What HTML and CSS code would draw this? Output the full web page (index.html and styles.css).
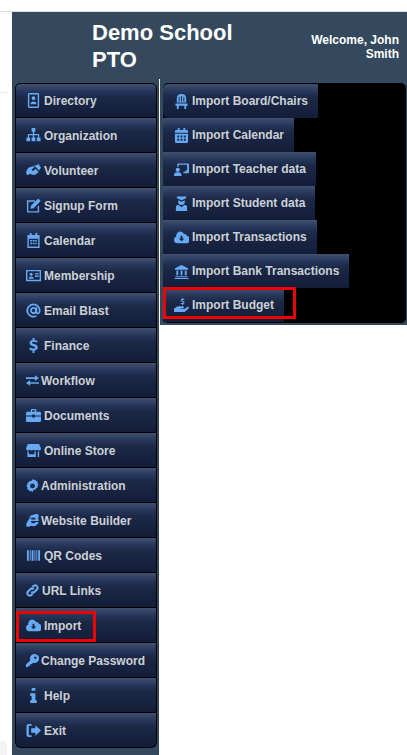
FILE: index.html
```html
<!DOCTYPE html>
<html lang="en">
<head>
    <meta charset="UTF-8">
    <meta name="viewport" content="width=device-width, initial-scale=1.0">
    <title>Import Budget</title>
    <link rel="stylesheet" href="styles.css">
</head>
<body>
    <div class="edge-line"></div>
    <div class="edge-chip"></div>

    <div class="page">
        <div class="header">
            <h1 class="school">Demo School PTO</h1>
            <div class="welcome">Welcome, John Smith</div>
        </div>

        <div class="body-row">
            <ul class="menu side">
                <li><a><span class="ico"><svg viewBox="0 0 16 16"><path fill-rule="evenodd" d="M3.500 0h9A1.500 1.500 0 0 1 14 1.500v13a1.500 1.500 0 0 1-1.500 1.500h-9A1.500 1.500 0 0 1 2 14.500v-13A1.500 1.500 0 0 1 3.500 0zM3.500 1.500v13h9v-13zM8 3.500a2 2 0 1 1 0 4 2 2 0 0 1 0-4zM4.800 12c0-2 1.400-3 3.200-3s3.200 1 3.200 3z"/></svg></span>Directory</a></li>
                <li><a><span class="ico"><svg viewBox="0 0 16 16"><path d="M6 0h4v4H8.700v2.500H14V10h1.500v4h-4v-4h1.300V7.800H8.700V10H10v4H6v-4h1.300V7.800H3.200V10h1.300v4h-4v-4H2V6.500h5.300V4H6z"/></svg></span>Organization</a></li>
                <li><a><span class="ico"><svg viewBox="0 0 16 16"><path d="M0 9.500L2.500 5 7 3.500l2.500.5-3.500 3 1 1.500 3.500-2L13.500 9.500 10 12.500H6.500L4.500 11.500 1 13zM8.500 3L12 2l1-1.500L16 5l-2 3-3.500-3.500z"/></svg></span>Volunteer</a></li>
                <li><a><span class="ico"><svg viewBox="0 0 16 16"><path d="M2 2.500h7.500V4h-7v10h10V8.500H14V15.500H1V2.500zM13 .5l2.700 2.700L8 11l-3.200.5.500-3.200z"/></svg></span>Signup Form</a></li>
                <li><a><span class="ico"><svg viewBox="0 0 16 16"><path fill-rule="evenodd" d="M4 0h2v2h4V0h2v2h2.500v14H1.500V2H4zM3 6v8.500h10V6zM4.500 7.500h2V9h-2zm2.700 0h2V9h-2zm2.700 0h1.700V9H9.900zM4.500 10.500h2V12h-2zm2.700 0h2V12h-2zm2.700 0h1.700V12H9.900z"/></svg></span>Calendar</a></li>
                <li><a><span class="ico"><svg viewBox="0 0 16 16"><path fill-rule="evenodd" d="M0 2h16v12H0zm1.500 1.500v9h13v-9zM5.500 5a1.700 1.700 0 1 1 0 3.400A1.700 1.700 0 0 1 5.500 5zM2.800 11.500c0-1.600 1.200-2.400 2.700-2.400s2.700.8 2.700 2.400zM9.500 5.500h4V7h-4zm0 2.500h4v1.500h-4z"/></svg></span>Membership</a></li>
                <li><a><span class="ico"><svg viewBox="0 0 16 16"><path fill-rule="evenodd" d="M8 .5a7.500 7.500 0 0 1 7.500 7.500c0 2.500-1.300 4-3.200 4-1 0-1.700-.5-2-1.200-.6.700-1.400 1.100-2.300 1.100A3.600 3.600 0 0 1 4.400 8 3.700 3.700 0 0 1 8 4.200c.8 0 1.500.3 2 .8V4.500h2v4.700c0 .7.200 1.100.7 1.100.7 0 1-1 1-2.300A5.700 5.700 0 1 0 8 13.700c1 0 2-.2 2.800-.7l.8 1.500A7.500 7.500 0 1 1 8 .5zM8 6.200A1.800 1.800 0 1 0 8 9.800 1.800 1.800 0 0 0 8 6.200z"/></svg></span>Email Blast</a></li>
                <li><a><span class="ico"><svg viewBox="0 0 16 16"><path d="M7 0h2v2c1.500.1 2.700.6 3.500 1.200l-1 1.800C10.500 4.400 9.400 4 8.300 4 7 4 6.500 4.500 6.500 5c0 .7.800 1 2.300 1.500 2.300.7 3.700 1.500 3.700 3.500 0 1.900-1.400 3-3.500 3.300V16H7v-2.700c-1.500-.1-2.800-.6-3.700-1.400l1.100-1.800c1 .7 2.300 1.200 3.500 1.200 1.300 0 2-.4 2-1.100 0-.7-.7-1-2.200-1.500C5.300 8 3.800 7.200 3.800 5.200 3.800 3.400 5.100 2.300 7 2z"/></svg></span>Finance</a></li>
                <li><a><span class="ico short"><svg viewBox="0 0 16 16"><path d="M0 4h11V1.500L16 5l-5 3.500V6H0zM16 10H5V7.500L0 11l5 3.500V12h11z"/></svg></span>Workflow</a></li>
                <li><a><span class="ico"><svg viewBox="0 0 16 16"><path fill-rule="evenodd" d="M5 2.500A1.500 1.500 0 0 1 6.500 1h3A1.500 1.500 0 0 1 11 2.500V4h3.500A1.500 1.500 0 0 1 16 5.500V8h-6.500V7h-3v1H0V5.500A1.500 1.500 0 0 1 1.500 4H5zM6.500 2.500V4h3V2.500zM0 9h6.500v1h3V9H16v4.500a1.500 1.500 0 0 1-1.500 1.500h-13A1.500 1.500 0 0 1 0 13.500z"/></svg></span>Documents</a></li>
                <li><a><span class="ico"><svg viewBox="0 0 16 16"><path d="M2 1h12l2 4.500C16 7 15 8 13.800 8c-.7 0-1.400-.4-1.800-1-.4.600-1.100 1-2 1s-1.600-.4-2-1c-.4.600-1.100 1-2 1s-1.600-.4-2-1c-.4.600-1.100 1-1.800 1C1 8 0 7 0 5.500zM1.500 9H3v3h6V9h1.500v6h-9zM12.500 9H14v6h-1.500z"/></svg></span>Online Store</a></li>
                <li><a><span class="ico short"><svg viewBox="0 0 16 16"><path fill-rule="evenodd" d="M8 0l1.500 1.200 2-.4 1 1.800 1.900.8-.2 2 1.300 1.600-1.300 1.600.2 2-1.900.8-1 1.800-2-.4L8 16l-1.500-1.200-2 .4-1-1.800-1.900-.8.200-2L.5 8.500l1.300-1.600-.2-2 1.900-.8 1-1.800 2 .4zM8 5.500a3 3 0 1 0 0 6 3 3 0 0 0 0-6z"/></svg></span>Administration</a></li>
                <li><a><span class="ico short"><svg viewBox="0 0 16 16"><path fill-rule="evenodd" d="M9 1c2-1 5.500-1.500 6.500.5.500 1-.1 2.300-.8 3.400.7 1 1.100 2.200 1.100 3.600H6c.1 2 1.500 3 3 3 1.200 0 2.300-.6 2.800-1.700h3.800C14.700 13 12 15 9 15c-1 0-2-.2-2.800-.6C4.500 15.500 2 16.500.8 15.300-.3 14.200.3 11.800 2 9 3.300 6.700 5 4.700 7 3.300 5 3.500 3.800 4.700 3 6 3.500 3.700 5.800 1.600 9 1zM6 6.800h6c0-1.500-1.300-2.600-3-2.600S6.100 5.300 6 6.800z"/></svg></span>Website Builder</a></li>
                <li><a><span class="ico"><svg viewBox="0 0 16 16"><path d="M1 2.500h2v11H1zm3 0h1v11H4zm2 0h2v11H6zm3 0h1v11H9zm2 0h1v11h-1zm2 0h2v11h-2z"/></svg></span>QR Codes</a></li>
                <li><a><span class="ico mid"><svg viewBox="0 0 16 16"><path class="line" d="M6.500 9.500a3 3 0 0 0 4.200 0l3-3a3 3 0 0 0-4.200-4.200L8 3.800M9.500 6.500a3 3 0 0 0-4.200 0l-3 3a3 3 0 0 0 4.200 4.200L8 12.200"/></svg></span>URL Links</a></li>
                <li><a><span class="ico"><svg viewBox="0 0 16 16"><path fill-rule="evenodd" d="M6.500 1.500a4.500 4.500 0 0 1 4.200 2.800A2.700 2.700 0 0 1 13.800 6.500 3.700 3.700 0 0 1 12.500 14H3.500a3.700 3.700 0 0 1-1-7.200A4.500 4.500 0 0 1 6.500 1.500zM7 6v3H5l3 3 3-3H9V6z"/></svg></span>Import</a><span class="marker"></span></li>
                <li><a><span class="ico short"><svg viewBox="0 0 16 16"><path fill-rule="evenodd" d="M10.500 0a5.500 5.500 0 1 1-1.700 10.700L7 12.500H5V14.500H3V16H0v-3l5.300-5.300A5.500 5.500 0 0 1 10.500 0zM11.500 3a1.500 1.500 0 1 0 0 3 1.500 1.500 0 0 0 0-3z"/></svg></span>Change Password</a></li>
                <li><a><span class="ico"><svg viewBox="0 0 16 16"><path d="M6 0h4v3H6zM4.500 5.500H10V13h1.500v3h-7v-3H6V8.500H4.500z"/></svg></span>Help</a></li>
                <li><a><span class="ico"><svg viewBox="0 0 16 16"><path d="M6 3H3.500C3 3 3 3.500 3 4v8c0 .5 0 1 .5 1H6v2H3a2.500 2.500 0 0 1-2.500-2.500v-9A2.500 2.500 0 0 1 3 1h3zM10 2.500L16 8l-6 5.500V10.500H5.500v-5H10z"/></svg></span>Exit</a></li>
            </ul>

            <div class="sub-panel">
                <ul class="menu sub">
                    <li><a><span class="ico"><svg viewBox="0 0 16 16"><path fill-rule="evenodd" d="M8 0c3 0 5 1.500 5 4.500V9H3V4.500C3 1.500 5 0 8 0zM5 3v5h1V3zm2.500-1v6h1V2zM10 3v5h1V3zM1.500 10h13v2.500H13V16h-2v-3.500H5V16H3v-3.500H1.500z"/></svg></span>Import Board/Chairs</a></li>
                    <li><a><span class="ico"><svg viewBox="0 0 16 16"><path fill-rule="evenodd" d="M4 0h2v2h4V0h2v2h1.500A1.500 1.500 0 0 1 15 3.500V5H1V3.500A1.500 1.500 0 0 1 2.500 2H4zM1 6h14v8.500a1.500 1.500 0 0 1-1.500 1.500h-11A1.500 1.500 0 0 1 1 14.500zM3.500 8v2h2V8zm3.500 0v2h2V8zm3.500 0v2h2V8zM3.500 11.500v2h2v-2zm3.500 0v2h2v-2zm3.500 0v2h2v-2z"/></svg></span>Import Calendar</a></li>
                    <li><a><span class="ico"><svg viewBox="0 0 16 16"><path d="M4 1.500h11a1 1 0 0 1 1 1V11a1 1 0 0 1-1 1h-5v-1.500h2V9h2V3H5v2H3.500V2A.5.500 0 0 1 4 1.500zM4 6a2.300 2.300 0 1 1 0 4.600A2.300 2.300 0 0 1 4 6zM0 14c0-1.700 1.300-3 3-3h2c1.700 0 3 1.300 3 3v1H0z"/></svg></span>Import Teacher data</a></li>
                    <li><a><span class="ico"><svg viewBox="0 0 16 16"><path d="M3 .5h10v2L8 4.500 3 2.500zM4.500 4.500L8 6l3.500-1.500V6a3.500 3.500 0 0 1-7 0zM2 11.500C2 10 3.500 9.500 5 9.500l3 2.500 3-2.500c1.500 0 3 .5 3 2V16H2z"/></svg></span>Import Student data</a></li>
                    <li><a><span class="ico"><svg viewBox="0 0 16 16"><path fill-rule="evenodd" d="M6.500 1.500a4.500 4.500 0 0 1 4.200 2.800A2.700 2.700 0 0 1 13.800 6.500 3.700 3.700 0 0 1 12.500 14H3.500a3.700 3.700 0 0 1-1-7.200A4.500 4.500 0 0 1 6.500 1.500zM7 6v3H5l3 3 3-3H9V6z"/></svg></span>Import Transactions</a></li>
                    <li><a><span class="ico"><svg viewBox="0 0 16 16"><path d="M8 1l7 3.500V6H1V4.500zM2.500 7h2v5h-2zm4.500 0h2v5H7zm4.500 0h2v5h-2zM1.500 13h13v1.200h-13zM.5 14.800h15V16H.5z"/></svg></span>Import Bank Transactions</a></li>
                    <li><a><span class="ico"><svg viewBox="0 0 16 16"><path d="M8.500 0h1.200v1c.6.100 1.100.3 1.500.5l-.4 1c-.5-.3-1-.4-1.500-.4-.6 0-.9.200-.9.500s.4.500 1.100.7c1 .3 1.700.7 1.700 1.600 0 .8-.6 1.400-1.500 1.500V7.500H8.500V6.400c-.7-.1-1.300-.3-1.700-.7l.5-1c.5.400 1.100.6 1.700.6.600 0 1-.2 1-.5s-.4-.5-1.100-.8C8 3.700 7.200 3.300 7.200 2.400c0-.8.500-1.300 1.300-1.400zM0 11.500L2.500 9.500c.8-.6 1.700-.8 2.500-.8h4.500a1.200 1.200 0 0 1 0 2.400H7v.6h4l3-2.200c1.200-.8 2.600.7 1.500 1.800l-3.500 3c-.5.400-1.100.7-1.800.7H0z"/></svg></span>Import Budget</a><span class="marker"></span></li>
                </ul>
            </div>
        </div>
    </div>
</body>
</html>
```

FILE: styles.css
```css
html, body {
    margin: 0;
    height: 100%;
    background-color: white;
    overflow: hidden;
}

body {
    position: relative;
    font-family: "Liberation Sans", Arial, sans-serif;
}

/* leftovers of the page behind, visible in the left gutter */
.edge-line {
    position: absolute;
    left: 0;
    top: 92px;
    width: 7px;
    height: 1px;
    background-color: #e8e8e8;
}

.edge-chip {
    position: absolute;
    left: 0;
    top: 740px;
    width: 7px;
    height: 15px;
    border-radius: 0 6px 0 0;
    background-color: #f4f4f6;
}

.page {
    margin-top: 11px;
    padding-left: 12px;
    border-top: 1px solid #d8dbdf;
}

.header {
    display: flex;
    justify-content: space-between;
    height: 71px;
    background-color: #34495e;
    color: white;
}

.school {
    width: 170px;
    margin: 7px 0 0 80px;
    font-size: 22px;
    line-height: 27px;
}

.welcome {
    width: 110px;
    margin: 21px 8px 0 0;
    font-size: 12px;
    font-weight: bold;
    line-height: 14px;
    text-align: right;
}

.body-row {
    display: flex;
    align-items: flex-start;
}

.menu {
    list-style: none;
    margin: 0;
    padding: 0;
}

.side {
    box-sizing: border-box;
    width: 147px;
    height: 672px;
    padding: 0 2px 0 3px;
    border-right: 1px solid #2f4258;
    background-color: #34495e;
}

.sub-panel {
    position: relative;
    width: 248px;
    box-sizing: border-box;
    border-left: 1px solid white;
    background-color: #34495e;
    padding: 0 1px 2px 3px;
}

/* white divider starts a little above the panel */
.sub-panel::before {
    content: "";
    position: absolute;
    left: -1px;
    top: -4px;
    width: 1px;
    height: 4px;
    background-color: white;
}

.sub {
    box-sizing: border-box;
    height: 240px;
    padding-top: 1px;
    background-color: black;
    border-radius: 5px;
}

.menu li {
    position: relative;
}

.menu a {
    display: flex;
    align-items: center;
    box-sizing: border-box;
    color: #ccd0d6;
    font-size: 12px;
    font-weight: bold;
    background: linear-gradient(#41506f, #26365a 22%, #1b2947 40%, #121d38);
}

.side a {
    width: 142px;
    height: 35px;
    padding: 1px 0 0 10px;
    border: 1px solid black;
    border-top: 0;
}

.side li:first-child a {
    padding-top: 0;
    border-top: 1px solid black;
    border-radius: 5px 5px 0 0;
}

.side li:last-child a {
    border-radius: 0 0 6px 6px;
}

.sub a {
    display: inline-flex;
    height: 34px;
    padding: 0 10px 0 11px;
    vertical-align: top;
}

.sub li {
    height: 34px;
}

.sub li:first-child a {
    border-radius: 5px 0 0 5px;
}

.ico {
    display: inline-flex;
    justify-content: center;
    flex: none;
    box-sizing: border-box;
    width: 18px;
    padding-right: 3px;
}

.ico.short {
    width: 15px;
    padding-right: 2px;
    justify-content: flex-start;
}

.ico.mid {
    width: 16px;
    padding-right: 3px;
}

.ico svg {
    width: 15px;
    height: 15px;
    flex: none;
    fill: #66a9f5;
}

.ico.short svg,
.ico.mid svg {
    width: 13px;
    height: 13px;
}

.ico .line {
    fill: none;
    stroke: #66a9f5;
    stroke-width: 2.5;
}

.marker {
    position: absolute;
    box-sizing: border-box;
    border: 3px solid #f00000;
    pointer-events: none;
}

.side .marker {
    left: 1px;
    top: 3px;
    width: 80px;
    height: 31px;
}

.sub .marker {
    left: 0;
    top: -1px;
    width: 133px;
    height: 32px;
}
```
